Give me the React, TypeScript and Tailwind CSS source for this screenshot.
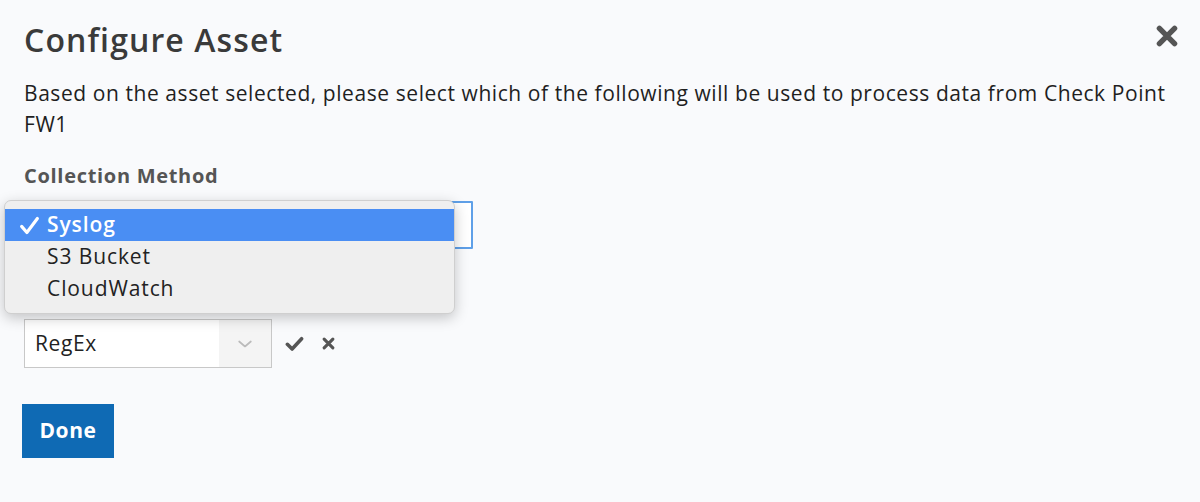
import React from 'react';

function Times({ className = '' }: { className?: string }) {
  return (
    <svg viewBox="0 0 24 24" className={className} fill="none" stroke="currentColor" strokeWidth="5" strokeLinecap="round">
      <path d="M5 5 L19 19 M19 5 L5 19" />
    </svg>
  );
}

function Check({ className = '' }: { className?: string }) {
  return (
    <svg viewBox="0 0 24 24" className={className} fill="none" stroke="currentColor" strokeWidth="4.5" strokeLinecap="round" strokeLinejoin="round">
      <path d="M3 13 L9 19 L21 6" />
    </svg>
  );
}

export default function App() {
  return (
    <div className="w-[1200px] h-[502px] bg-[#f9fafc] text-[#333] px-6 pt-[18px] overflow-hidden" style={{ fontFamily: '"Open Sans", "Liberation Sans", sans-serif' }}>
      <div className="flex items-start justify-between">
        <h1 className="text-[32px] leading-[44px] font-semibold text-[#3a3a3a] tracking-[1.1px]">Configure Asset</h1>
        <button className="mt-[5px] mr-[-4px] text-[#555]">
          <Times className="w-[26px] h-[26px]" />
        </button>
      </div>

      <p className="mt-[16px] text-[21px] leading-[31px] text-[#1f1f1f] tracking-[0.57px] pr-2">
        Based on the asset selected, please select which of the following will be used to process data from Check Point FW1
      </p>

      <div className="mt-[22px] text-[20px] leading-[28px] font-bold text-[#555] tracking-[0.7px]">Collection Method</div>

      <div className="relative mt-[11px]">
        <div className="w-[449px] h-[48px] border-2 border-[#5fa0e8] bg-white rounded-[1px]" />
        <div className="h-[60px]" />

        {/* native select popup */}
        <div className="absolute left-[-20px] top-[-1px] w-[451px] rounded-[7px] bg-[#efefef] border border-[#cfcfcf] shadow-[0_4px_14px_rgba(0,0,0,0.22)] py-[8px] text-[21px] tracking-[0.9px] text-[#222]">
          <div className="flex items-center h-[32px] bg-[#4a8ef3] text-white font-semibold">
            <span className="w-[42px] flex justify-center pl-[6px]">
              <svg viewBox="0 0 24 24" className="w-[21px] h-[21px]" fill="none" stroke="white" strokeWidth="3.6" strokeLinecap="round" strokeLinejoin="round">
                <path d="M3 13 L9 20 L21 4" />
              </svg>
            </span>
            <span>Syslog</span>
          </div>
          <div className="flex items-center h-[32px] pl-[42px]">S3 Bucket</div>
          <div className="flex items-center h-[32px] pl-[42px]">CloudWatch</div>
        </div>
      </div>

      <div className="flex items-center mt-[10px]">
        <div className="flex w-[248px] h-[49px] border border-[#c8c8c8] bg-white">
          <div className="flex-1 flex items-center pl-[10px] text-[21px] tracking-[0.6px] text-[#222]">RegEx</div>
          <div className="w-[52px] bg-[#f4f4f4] flex items-center justify-center text-[#bbb]">
            <svg viewBox="0 0 24 24" className="w-[20px] h-[20px]" fill="none" stroke="currentColor" strokeWidth="2" strokeLinecap="round" strokeLinejoin="round">
              <path d="M5 9 L12 15 L19 9" />
            </svg>
          </div>
        </div>
        <Check className="ml-[13px] w-[19px] h-[19px] text-[#555]" />
        <Times className="ml-[17px] w-[15px] h-[15px] text-[#555]" />
      </div>

      <button className="block mt-[36px] ml-[-2px] w-[92px] h-[54px] bg-[#0f6ab4] text-white text-[21px] tracking-[0.6px] font-bold">Done</button>
    </div>
  );
}
